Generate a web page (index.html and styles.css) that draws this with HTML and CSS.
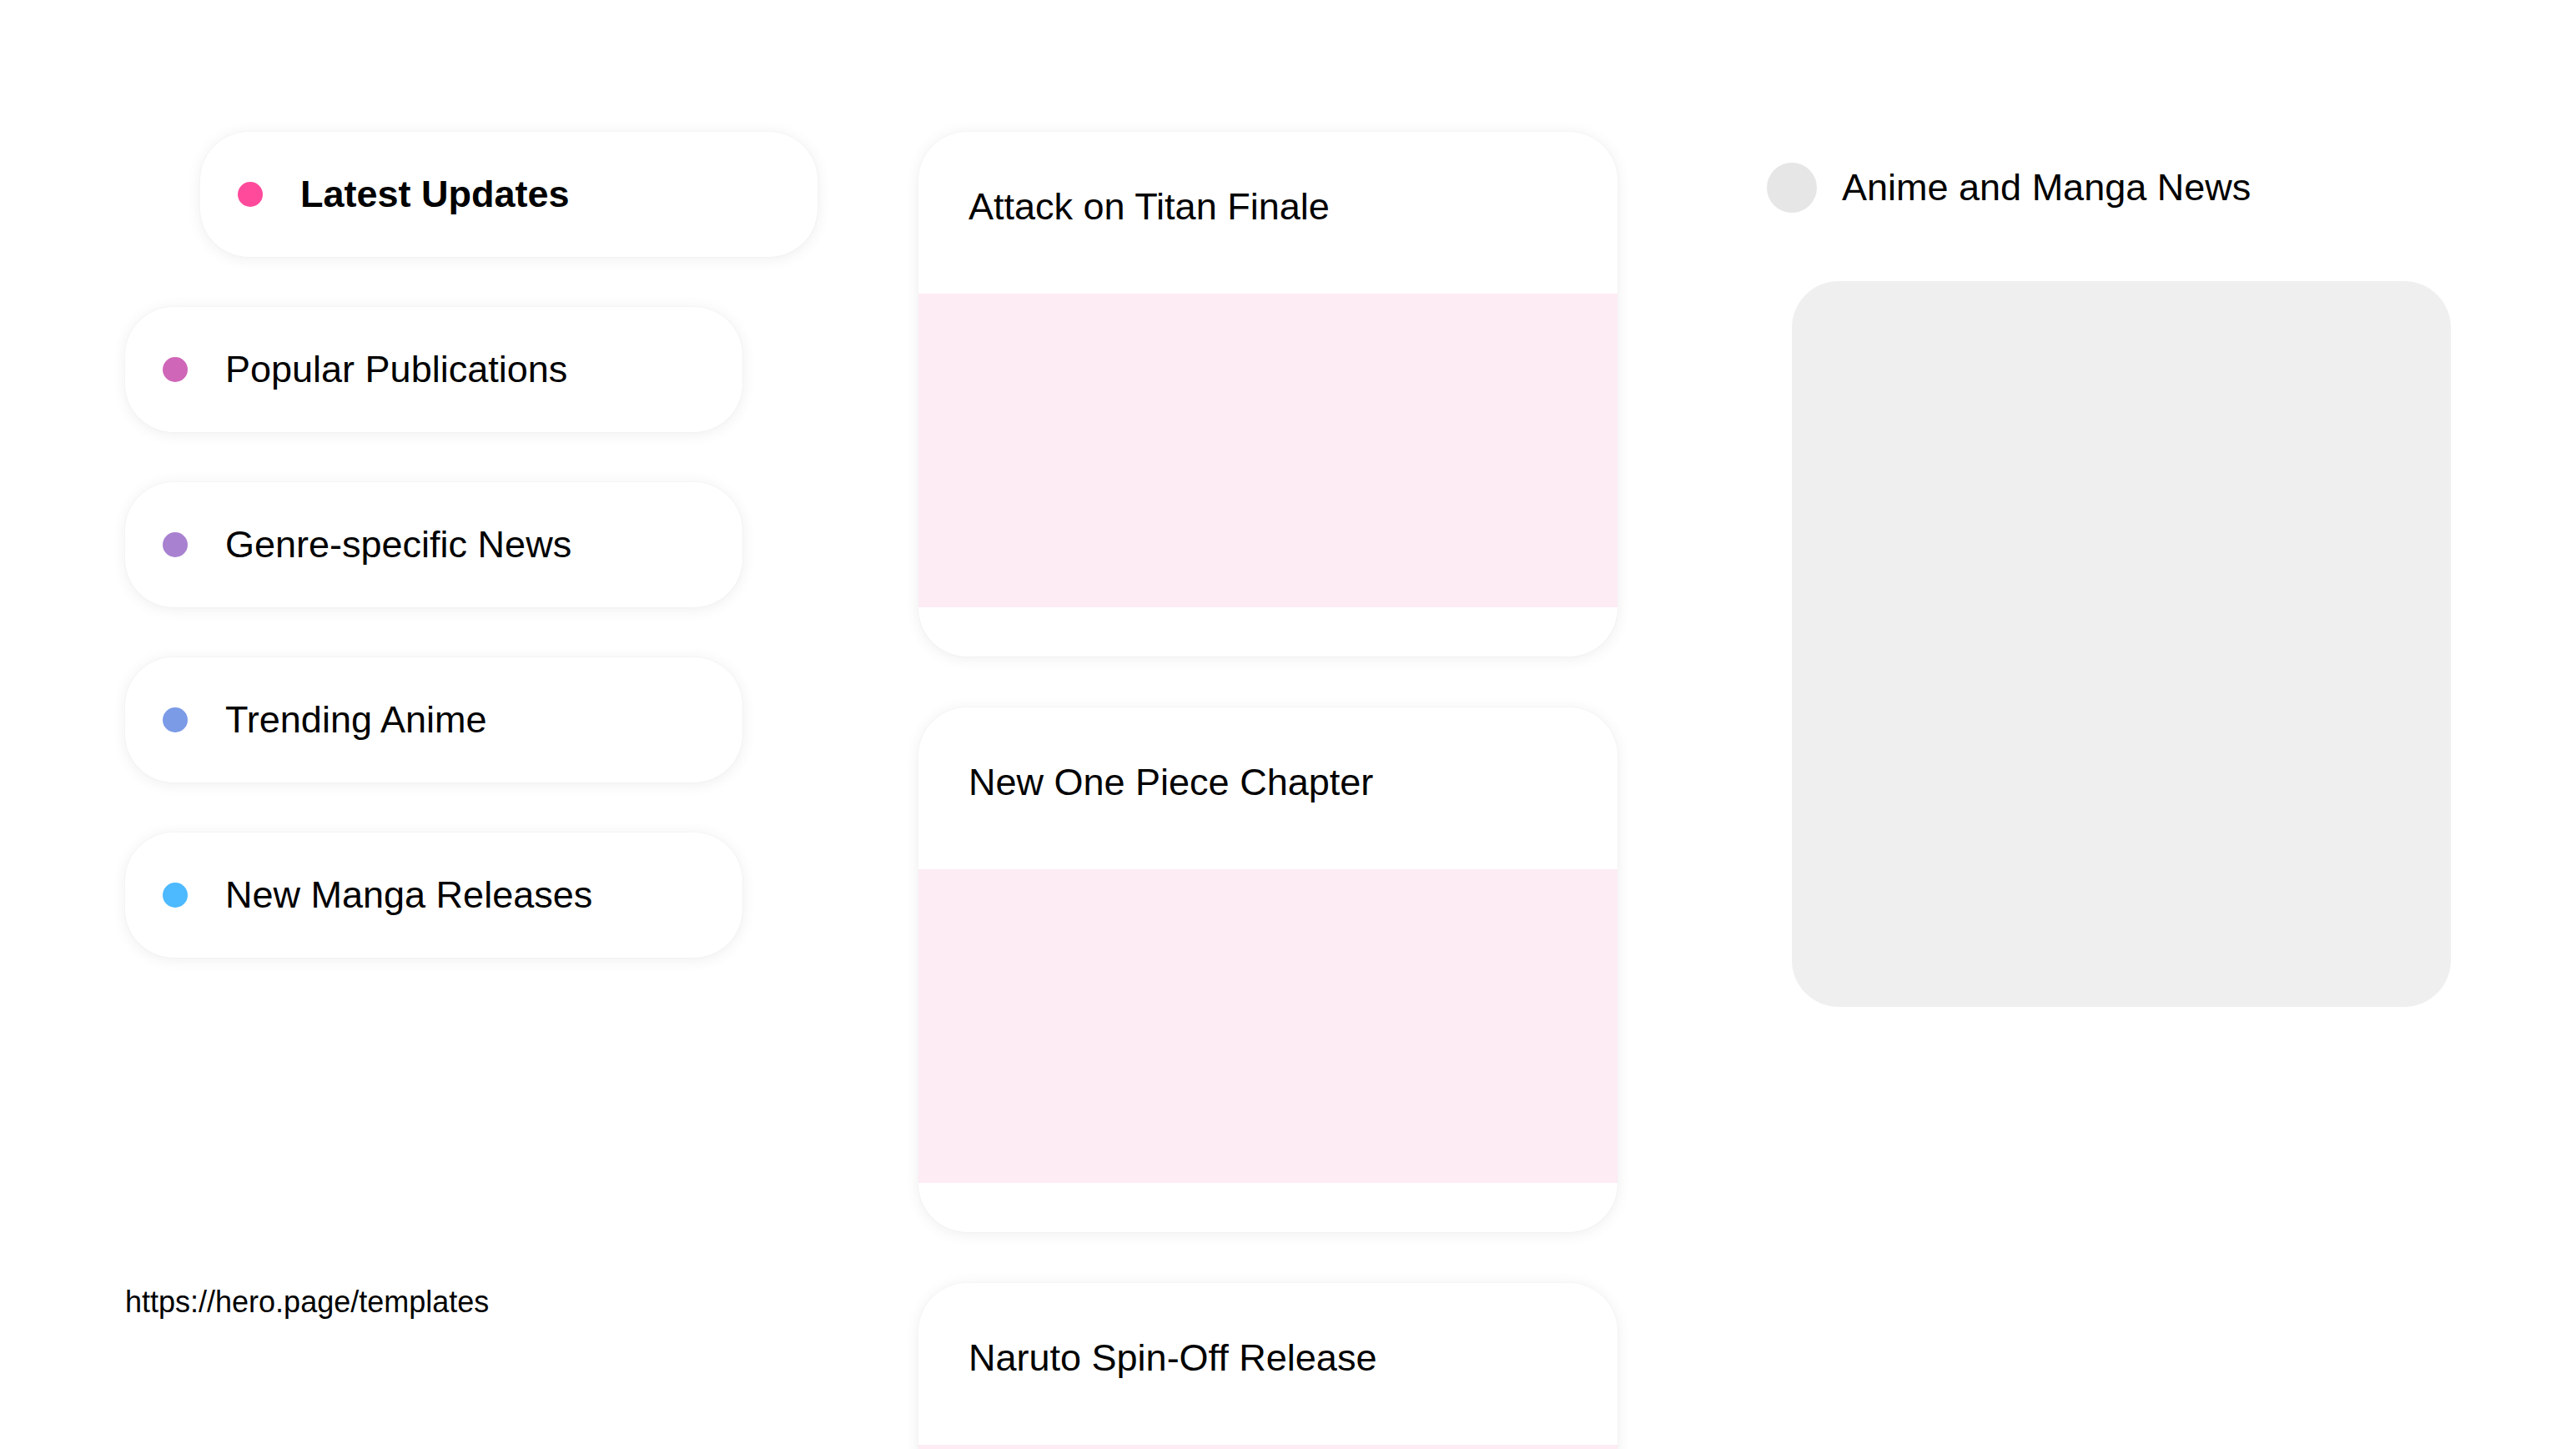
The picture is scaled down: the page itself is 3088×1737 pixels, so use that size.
FILE: index.html
```html
<!DOCTYPE html>
<html lang="en">
<head>
<meta charset="utf-8">
<title>Anime and Manga News</title>
<link rel="stylesheet" href="styles.css">
</head>
<body>
<div class="page">
  <aside class="left">
    <nav class="nav">
      <div class="pill pill-active"><span class="dot dot-1"></span><span class="pill-label">Latest Updates</span></div>
      <div class="pill"><span class="dot dot-2"></span><span class="pill-label">Popular Publications</span></div>
      <div class="pill"><span class="dot dot-3"></span><span class="pill-label">Genre-specific News</span></div>
      <div class="pill"><span class="dot dot-4"></span><span class="pill-label">Trending Anime</span></div>
      <div class="pill"><span class="dot dot-5"></span><span class="pill-label">New Manga Releases</span></div>
    </nav>
    <div class="url">https://hero.page/templates</div>
  </aside>

  <main class="middle">
    <article class="card">
      <div class="card-head"><h2 class="card-title">Attack on Titan Finale</h2></div>
      <div class="card-media"></div>
    </article>
    <article class="card">
      <div class="card-head"><h2 class="card-title">New One Piece Chapter</h2></div>
      <div class="card-media"></div>
    </article>
    <article class="card">
      <div class="card-head"><h2 class="card-title">Naruto Spin-Off Release</h2></div>
      <div class="card-media"></div>
    </article>
  </main>

  <section class="right">
    <div class="right-head">
      <span class="avatar"></span>
      <span class="right-title">Anime and Manga News</span>
    </div>
    <div class="panel"></div>
  </section>
</div>
</body>
</html>
```

FILE: styles.css
```css
html, body {
  margin: 0;
  padding: 0;
  height: 100%;
  overflow: hidden;
  background: #ffffff;
}

body {
  font-family: "Liberation Sans", Arial, Helvetica, sans-serif;
  color: #000000;
}

.page {
  display: flex;
  align-items: flex-start;
  padding: 158px 0 0 150px;
}

/* Left column */
.left {
  width: 830px;
  flex: none;
  display: flex;
  flex-direction: column;
}

.nav {
  display: flex;
  flex-direction: column;
  gap: 60px;
}

.pill {
  box-sizing: border-box;
  width: 740px;
  height: 150px;
  border-radius: 58px;
  background: #ffffff;
  box-shadow: 0 2px 18px rgba(0, 0, 0, 0.07), 0 0 2px rgba(0, 0, 0, 0.05);
  display: flex;
  align-items: center;
  padding-left: 45px;
  gap: 45px;
}

.pill-active {
  margin-left: 90px;
}

.pill-active .pill-label {
  font-weight: 700;
}

.pill-label {
  font-size: 45px;
  line-height: 52px;
}

.dot {
  width: 30px;
  height: 30px;
  border-radius: 50%;
  flex: none;
}

.dot-1 { background: #ff4a9c; }
.dot-2 { background: #d066b8; }
.dot-3 { background: #a882d0; }
.dot-4 { background: #7b9be7; }
.dot-5 { background: #4db9ff; }

.url {
  margin-top: 392px;
  font-size: 36px;
  line-height: 41px;
}

/* Middle column */
.middle {
  margin-left: 121px;
  width: 838px;
  flex: none;
  display: flex;
  flex-direction: column;
  gap: 61px;
}

.card {
  background: #ffffff;
  border-radius: 58px;
  box-shadow: 0 2px 18px rgba(0, 0, 0, 0.07), 0 0 2px rgba(0, 0, 0, 0.05);
  padding-bottom: 59px;
  overflow: hidden;
}

.card-head {
  box-sizing: border-box;
  height: 194px;
  padding: 64px 60px 0;
}

.card-title {
  margin: 0;
  font-size: 45px;
  line-height: 52px;
  font-weight: 400;
}

.card-media {
  height: 376px;
  background: #fdecf4;
}

/* Right column */
.right {
  margin-left: 179px;
  padding-top: 37px;
  flex: none;
}

.right-head {
  display: flex;
  align-items: center;
  gap: 30px;
}

.avatar {
  width: 60px;
  height: 60px;
  border-radius: 50%;
  background: #e6e6e6;
  flex: none;
}

.right-title {
  font-size: 45px;
  line-height: 52px;
}

.panel {
  margin: 82px 0 0 30px;
  width: 790px;
  height: 870px;
  border-radius: 56px;
  background: #efefef;
}
```
